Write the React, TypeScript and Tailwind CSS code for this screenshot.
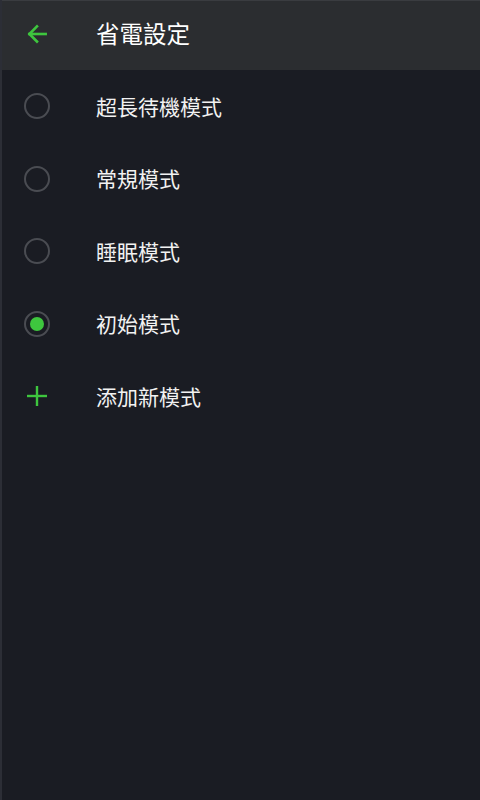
import React from "react";

const items = [
  { label: "超長待機模式", selected: false },
  { label: "常規模式", selected: false },
  { label: "睡眠模式", selected: false },
  { label: "初始模式", selected: true },
];

export default function App() {
  return (
    <div
      className="w-[480px] h-[800px] bg-[#1a1c23] flex flex-col border-l-2 border-[#2c2e36]"
      style={{ fontFamily: '"Noto Sans CJK TC", "Noto Sans", sans-serif' }}
    >
      <div className="h-[70px] bg-[#2b2d30] flex items-center border-t border-[#3a3c40]">
        <div className="w-[72px] flex justify-center -ml-[1px] -mt-[3px]">
          <svg width="26" height="26" viewBox="0 0 24 24" fill="none" stroke="#3ec63e" strokeWidth="2.4" strokeLinecap="square">
            <path d="M20 12H5" />
            <path d="M12 5l-7 7 7 7" />
          </svg>
        </div>
        <div className="ml-[23px] -mt-[4px] text-[23.5px] text-white leading-none">省電設定</div>
      </div>
      <div className="flex flex-col">
        {items.map((it) => (
          <div key={it.label} className="h-[72.5px] flex items-center">
            <div className="w-[72px] flex justify-center -ml-[1px]">
              <div className="w-[26px] h-[26px] rounded-full border-2 border-[#4a4c52] flex items-center justify-center">
                {it.selected && <div className="w-[14px] h-[14px] rounded-full bg-[#3ec63e]" />}
              </div>
            </div>
            <div className="ml-[23px] text-[21px] text-[#f2f2f2] leading-none">{it.label}</div>
          </div>
        ))}
        <div className="h-[72.5px] flex items-center">
          <div className="w-[72px] flex justify-center -ml-[1px]">
            <svg width="24" height="24" viewBox="0 0 24 24" fill="none" stroke="#3ec63e" strokeWidth="2.4">
              <path d="M12 2v20" />
              <path d="M2 12h20" />
            </svg>
          </div>
          <div className="ml-[23px] text-[21px] text-[#f2f2f2] leading-none">添加新模式</div>
        </div>
      </div>
    </div>
  );
}
